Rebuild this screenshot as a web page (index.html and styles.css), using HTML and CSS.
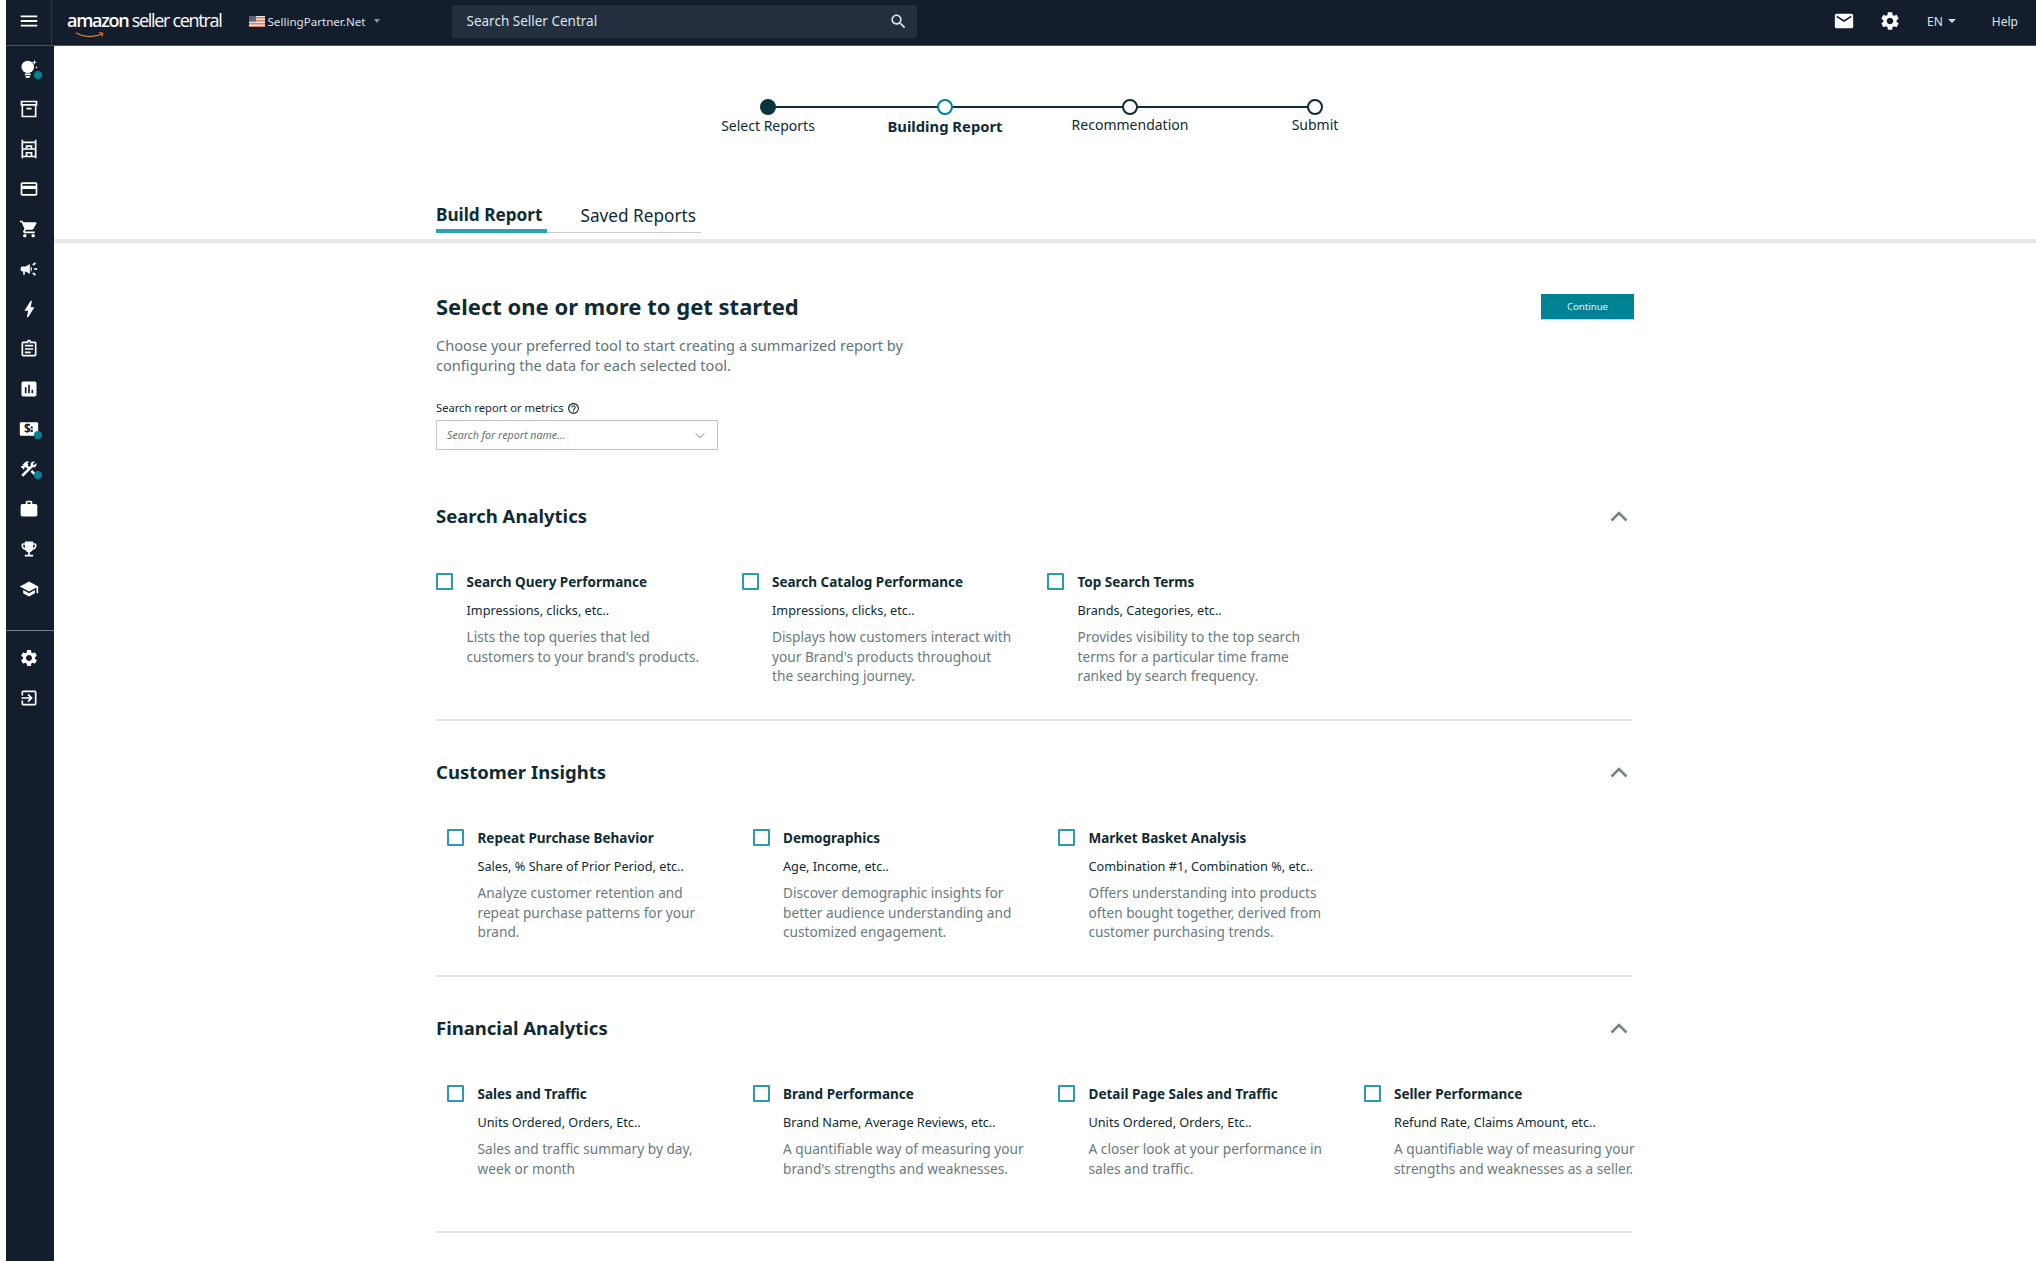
FILE: index.html
```html
<!DOCTYPE html>
<html lang="en">
<head>
    <meta charset="UTF-8">
    <title>Amazon Seller Central</title>
    <link rel="stylesheet" href="styles.css">
</head>
<body>
    <header class="topbar">
        <div class="menu-cell">
            <svg class="icon" viewBox="0 0 24 24"><path d="M3 18h18v-2H3v2zm0-5h18v-2H3v2zm0-7v2h18V6H3z"/></svg>
        </div>
        <div class="logo">
            <span class="logo-text"><b>amazon</b> seller central</span>
            <svg class="logo-smile" viewBox="0 0 34 8"><path d="M1 1.5C10 7 22 7 31 2.5" fill="none" stroke="#e8843a" stroke-width="1.3"/><path d="M27 1.2l4.6.6-1 4" fill="none" stroke="#e8843a" stroke-width="1.1"/></svg>
        </div>
        <div class="account">
            <svg class="flag" viewBox="0 0 16 11"><rect width="16" height="11" fill="#e9e4df"/><path d="M0 1h16v1.5H0zM0 4h16v1.5H0zM0 7h16v1.5H0zM0 10h16v1H0z" fill="#d9815f"/><rect width="7" height="5.5" fill="#5b6478"/></svg>
            <span>SellingPartner.Net</span>
            <i class="caret caret-dim"></i>
        </div>
        <div class="top-search">
            <span>Search Seller Central</span>
            <svg class="icon-search" viewBox="0 0 24 24"><path d="M15.5 14h-.79l-.28-.27C15.41 12.59 16 11.11 16 9.5 16 5.91 13.09 3 9.5 3S3 5.91 3 9.5 5.91 16 9.5 16c1.61 0 3.09-.59 4.23-1.57l.27.28v.79l5 4.99L20.49 19l-4.99-5zm-6 0C7.01 14 5 11.99 5 9.5S7.01 5 9.5 5 14 7.01 14 9.5 11.99 14 9.5 14z"/></svg>
        </div>
        <div class="top-right">
            <svg class="icon icon-mail" viewBox="0 0 24 24"><path d="M20 4H4c-1.1 0-1.99.9-1.99 2L2 18c0 1.1.9 2 2 2h16c1.1 0 2-.9 2-2V6c0-1.1-.9-2-2-2zm0 4l-8 5-8-5V6l8 5 8-5v2z"/></svg>
            <svg class="icon icon-gear" viewBox="0 0 24 24"><path d="M19.14 12.94c.04-.3.06-.61.06-.94 0-.32-.02-.64-.07-.94l2.03-1.58c.18-.14.23-.41.12-.61l-1.92-3.32c-.12-.22-.37-.29-.59-.22l-2.39.96c-.5-.38-1.03-.7-1.62-.94l-.36-2.54c-.04-.24-.24-.41-.48-.41h-3.84c-.24 0-.43.17-.47.41l-.36 2.54c-.59.24-1.13.57-1.62.94l-2.39-.96c-.22-.08-.47 0-.59.22L2.74 8.87c-.12.21-.08.47.12.61l2.03 1.58c-.05.3-.09.63-.09.94s.02.64.07.94l-2.03 1.58c-.18.14-.23.41-.12.61l1.92 3.32c.12.22.37.29.59.22l2.39-.96c.5.38 1.03.7 1.62.94l.36 2.54c.05.24.24.41.48.41h3.84c.24 0 .44-.17.47-.41l.36-2.54c.59-.24 1.13-.56 1.62-.94l2.39.96c.22.08.47 0 .59-.22l1.92-3.32c.12-.22.07-.47-.12-.61l-2.01-1.58zM12 15.6c-1.98 0-3.6-1.62-3.6-3.6s1.62-3.6 3.6-3.6 3.6 1.62 3.6 3.6-1.62 3.6-3.6 3.6z"/></svg>
            <span class="lang">EN</span><i class="caret"></i>
            <span class="help">Help</span>
        </div>
    </header>

    <div class="layout">
        <nav class="sidebar">
            <div class="side-group">
                <div class="side-item">
                    <svg class="icon" viewBox="0 0 24 24"><circle cx="10.5" cy="9.5" r="7.5"/><path d="M7 17.5h7v2H7zM8 20.5h5v2H8zM18.5 1l.8 2.2 2.2.8-2.2.8-.8 2.2-.8-2.2-2.2-.8 2.2-.8zM21 8.5l.5 1 1 .5-1 .5-.5 1-.5-1-1-.5 1-.5z"/></svg>
                    <i class="dot"></i>
                </div>
                <div class="side-item">
                    <svg class="icon" viewBox="0 0 24 24"><path fill-rule="evenodd" d="M2 2h20v6h-1v14H3V8H2zm2 2v2h16V4zm1 4v12h14V8zm4 2.5h6v2H9z"/></svg>
                </div>
                <div class="side-item">
                    <svg class="icon" viewBox="0 0 24 24"><path fill-rule="evenodd" d="M3 1h2v2h14V1h2v22h-2v-1H5v1H3zm2 4v6h3V7.500h8V11h3V5zm0 8v7h3v-4.500h8V20h3v-7zm5-3.500V11h4V9.500zm0 8V20h4v-2.500z"/></svg>
                </div>
                <div class="side-item">
                    <svg class="icon" viewBox="0 0 24 24"><path d="M20 4H4c-1.11 0-1.99.89-1.99 2L2 18c0 1.11.89 2 2 2h16c1.11 0 2-.89 2-2V6c0-1.11-.89-2-2-2zm0 14H4v-6h16v6zm0-10H4V6h16v2z"/></svg>
                </div>
                <div class="side-item">
                    <svg class="icon" viewBox="0 0 24 24"><path d="M7 18c-1.100 0-1.990.9-1.990 2S5.900 22 7 22s2-.9 2-2-.9-2-2-2zM1 2v2h2l3.600 7.590-1.350 2.450c-.16.28-.25.61-.25.96 0 1.100.9 2 2 2h12v-2H7.420c-.14 0-.25-.11-.25-.25l.03-.12.9-1.630h7.450c.75 0 1.410-.41 1.750-1.030l3.580-6.490c.08-.14.12-.31.12-.48 0-.55-.45-1-1-1H5.210l-.94-2H1zm16 16c-1.100 0-1.990.9-1.990 2s.89 2 1.990 2 2-.9 2-2-.9-2-2-2z"/></svg>
                </div>
                <div class="side-item">
                    <svg class="icon" viewBox="0 0 24 24"><path d="M18 11v2h4v-2h-4zm-2 6.610c.96.71 2.210 1.650 3.200 2.390.4-.53.8-1.070 1.200-1.600-.99-.74-2.240-1.680-3.200-2.400-.4.54-.8 1.080-1.200 1.610zM20.400 5.600c-.4-.53-.8-1.070-1.200-1.600-.99.74-2.240 1.680-3.200 2.400.4.53.8 1.070 1.200 1.600.96-.72 2.210-1.650 3.200-2.400zM4 9c-1.100 0-2 .9-2 2v2c0 1.100.9 2 2 2h1v4h2v-4h1l5 3V6L8 9H4zm11.500 3c0-1.330-.58-2.530-1.500-3.350v6.690c.92-.81 1.500-2.010 1.500-3.340z"/></svg>
                </div>
                <div class="side-item">
                    <svg class="icon" viewBox="0 0 24 24"><path d="M11 22h-1.500l1.500-8H6.500L14 2h1.500L14 10h4.500z"/></svg>
                </div>
                <div class="side-item">
                    <svg class="icon" viewBox="0 0 24 24"><path d="M19 3h-4.180C14.400 1.840 13.300 1 12 1s-2.400.84-2.820 2H5c-1.100 0-2 .9-2 2v14c0 1.100.9 2 2 2h14c1.100 0 2-.9 2-2V5c0-1.100-.9-2-2-2zm-7 0c.55 0 1 .45 1 1s-.45 1-1 1-1-.45-1-1 .45-1 1-1zm7 16H5V5h14v14zM7 15h7v2H7zm0-4h10v2H7zm0-4h10v2H7z"/></svg>
                </div>
                <div class="side-item">
                    <svg class="icon" viewBox="0 0 24 24"><path d="M19 3H5c-1.100 0-2 .9-2 2v14c0 1.100.9 2 2 2h14c1.100 0 2-.9 2-2V5c0-1.100-.9-2-2-2zM9 17H7v-7h2v7zm4 0h-2V7h2v10zm4 0h-2v-4h2v4z"/></svg>
                </div>
                <div class="side-item">
                    <svg class="icon" viewBox="0 0 24 24"><rect x="1" y="4" width="22" height="16" rx="1.500"/><text x="6" y="17" class="money">$</text><path d="M14 9h2.500v2.500H14zM14 13h2.500v2.500H14z" fill="#131d2c"/></svg>
                    <i class="dot"></i>
                </div>
                <div class="side-item">
                    <svg class="icon" viewBox="0 0 24 24"><path d="M13.783 15.172l2.121-2.121 5.996 5.996-2.121 2.121zM17.500 10c1.930 0 3.500-1.570 3.500-3.500 0-.58-.16-1.120-.41-1.600l-2.700 2.700-1.490-1.490 2.700-2.700c-.48-.25-1.020-.41-1.600-.41C15.570 3 14 4.570 14 6.500c0 .41.08.8.21 1.160l-1.850 1.850-1.780-1.780.71-.71-1.410-1.410L12 3.490c-1.170-1.170-3.070-1.170-4.240 0L4.220 7.030l1.410 1.410H2.810l-.71.71 3.540 3.540.71-.71V9.150l1.410 1.410.71-.71 1.780 1.780-7.410 7.410 2.120 2.120L16.340 9.790c.36.13.75.21 1.160.21z"/></svg>
                    <i class="dot"></i>
                </div>
                <div class="side-item">
                    <svg class="icon" viewBox="0 0 24 24"><path d="M20 6h-4V4c0-1.110-.89-2-2-2h-4c-1.110 0-2 .89-2 2v2H4c-1.110 0-1.990.89-1.990 2L2 19c0 1.110.89 2 2 2h16c1.110 0 2-.89 2-2V8c0-1.110-.89-2-2-2zm-6 0h-4V4h4v2z"/></svg>
                </div>
                <div class="side-item">
                    <svg class="icon" viewBox="0 0 24 24"><path d="M19 5h-2V3H7v2H5c-1.100 0-2 .9-2 2v1c0 2.550 1.920 4.630 4.390 4.940.63 1.500 1.980 2.630 3.610 2.960V19H7v2h10v-2h-4v-3.100c1.630-.33 2.980-1.460 3.610-2.960C19.080 12.630 21 10.550 21 8V7c0-1.100-.9-2-2-2zM5 8V7h2v3.820C5.840 10.400 5 9.300 5 8zm14 0c0 1.300-.84 2.400-2 2.820V7h2v1z"/></svg>
                </div>
                <div class="side-item">
                    <svg class="icon" viewBox="0 0 24 24"><path d="M5 13.180v4L12 21l7-3.820v-4L12 17l-7-3.820zM12 3L1 9l11 6 9-4.910V17h2V9L12 3z"/></svg>
                </div>
            </div>
            <div class="side-group side-bottom">
                <div class="side-item">
                    <svg class="icon" viewBox="0 0 24 24"><path d="M19.140 12.940c.04-.3.06-.61.06-.94 0-.32-.02-.64-.07-.94l2.030-1.580c.18-.14.23-.41.12-.61l-1.920-3.320c-.12-.22-.37-.29-.59-.22l-2.390.96c-.5-.38-1.030-.7-1.620-.94l-.36-2.540c-.04-.24-.24-.41-.48-.41h-3.840c-.24 0-.43.17-.47.41l-.36 2.540c-.59.24-1.130.57-1.620.94l-2.390-.96c-.22-.08-.47 0-.59.22L2.740 8.870c-.12.21-.08.47.12.61l2.030 1.580c-.05.3-.09.63-.09.94s.02.64.07.94l-2.030 1.580c-.18.14-.23.41-.12.61l1.920 3.320c.12.22.37.29.59.22l2.390-.96c.5.38 1.030.7 1.620.94l.36 2.540c.05.24.24.41.48.41h3.840c.24 0 .44-.17.47-.41l.36-2.540c.59-.24 1.130-.56 1.620-.94l2.390.96c.22.08.47 0 .59-.22l1.920-3.320c.12-.22.07-.47-.12-.61l-2.010-1.580zM12 15.600c-1.980 0-3.600-1.620-3.600-3.600s1.620-3.600 3.600-3.600 3.600 1.620 3.600 3.600-1.620 3.600-3.600 3.600z"/></svg>
                </div>
                <div class="side-item">
                    <svg class="icon" viewBox="0 0 24 24"><path d="M10.090 15.590L11.500 17l5-5-5-5-1.410 1.410L12.670 11H3v2h9.670l-2.580 2.590zM19 3H5c-1.110 0-2 .9-2 2v4h2V5h14v14H5v-4H3v4c0 1.100.89 2 2 2h14c1.100 0 2-.9 2-2V5c0-1.100-.9-2-2-2z"/></svg>
                </div>
            </div>
        </nav>

        <main class="main">
            <div class="stepper">
                <div class="step step-first"><span class="step-dot done"></span><span class="step-label">Select Reports</span></div>
                <div class="step step-active"><span class="step-dot current"></span><span class="step-label">Building Report</span></div>
                <div class="step step-next"><span class="step-dot"></span><span class="step-label">Recommendation</span></div>
                <div class="step step-next"><span class="step-dot"></span><span class="step-label">Submit</span></div>
            </div>

            <div class="tabs-wrap">
                <div class="tabs">
                    <div class="tab tab-active">Build Report</div>
                    <div class="tab">Saved Reports</div>
                </div>
            </div>

            <div class="content">
                <div class="intro">
                    <div class="intro-text">
                        <h1>Select one or more to get started</h1>
                        <p class="intro-desc">Choose your preferred tool to start creating a summarized report by<br>configuring the data for each selected tool.</p>
                        <div class="field-label">Search report or metrics
                            <svg class="help-icon" viewBox="0 0 24 24"><path d="M11 18h2v-2h-2v2zm1-16C6.480 2 2 6.480 2 12s4.480 10 10 10 10-4.480 10-10S17.520 2 12 2zm0 18c-4.410 0-8-3.590-8-8s3.590-8 8-8 8 3.590 8 8-3.590 8-8 8zm0-14c-2.210 0-4 1.790-4 4h2c0-1.100.9-2 2-2s2 .9 2 2c0 2-3 1.750-3 5h2c0-2.250 3-2.500 3-5 0-2.210-1.790-4-4-4z"/></svg>
                        </div>
                        <div class="report-search">
                            <span>Search for report name...</span>
                            <svg class="chev-down" viewBox="0 0 12 8"><path d="M1 1.500l5 5 5-5" fill="none" stroke="#7b8a8d" stroke-width="1.200"/></svg>
                        </div>
                    </div>
                    <button class="continue">Continue</button>
                </div>

                <section class="section">
                    <div class="section-head">
                        <h2>Search Analytics</h2>
                        <svg class="chev-up" viewBox="0 0 18 11"><path d="M1.500 9.500L9 2l7.500 7.500" fill="none" stroke="#6f8387" stroke-width="2.500"/></svg>
                    </div>
                    <div class="tools">
                        <div class="tool">
                            <span class="check"></span>
                            <div>
                                <div class="tool-name">Search Query Performance</div>
                                <div class="tool-sub">Impressions, clicks, etc..</div>
                                <p class="tool-desc">Lists the top queries that led<br>customers to your brand's products.</p>
                            </div>
                        </div>
                        <div class="tool">
                            <span class="check"></span>
                            <div>
                                <div class="tool-name">Search Catalog Performance</div>
                                <div class="tool-sub">Impressions, clicks, etc..</div>
                                <p class="tool-desc">Displays how customers interact with<br>your Brand's products throughout<br>the searching journey.</p>
                            </div>
                        </div>
                        <div class="tool">
                            <span class="check"></span>
                            <div>
                                <div class="tool-name">Top Search Terms</div>
                                <div class="tool-sub">Brands, Categories, etc..</div>
                                <p class="tool-desc">Provides visibility to the top search<br>terms for a particular time frame<br>ranked by search frequency.</p>
                            </div>
                        </div>
                    </div>
                </section>

                <section class="section">
                    <div class="section-head">
                        <h2>Customer Insights</h2>
                        <svg class="chev-up" viewBox="0 0 18 11"><path d="M1.500 9.500L9 2l7.500 7.500" fill="none" stroke="#6f8387" stroke-width="2.500"/></svg>
                    </div>
                    <div class="tools tools-indent">
                        <div class="tool">
                            <span class="check"></span>
                            <div>
                                <div class="tool-name">Repeat Purchase Behavior</div>
                                <div class="tool-sub">Sales, % Share of Prior Period, etc..</div>
                                <p class="tool-desc">Analyze customer retention and<br>repeat purchase patterns for your<br>brand.</p>
                            </div>
                        </div>
                        <div class="tool">
                            <span class="check"></span>
                            <div>
                                <div class="tool-name">Demographics</div>
                                <div class="tool-sub">Age, Income, etc..</div>
                                <p class="tool-desc">Discover demographic insights for<br>better audience understanding and<br>customized engagement.</p>
                            </div>
                        </div>
                        <div class="tool">
                            <span class="check"></span>
                            <div>
                                <div class="tool-name">Market Basket Analysis</div>
                                <div class="tool-sub">Combination #1, Combination %, etc..</div>
                                <p class="tool-desc">Offers understanding into products<br>often bought together, derived from<br>customer purchasing trends.</p>
                            </div>
                        </div>
                    </div>
                </section>

                <section class="section">
                    <div class="section-head">
                        <h2>Financial Analytics</h2>
                        <svg class="chev-up" viewBox="0 0 18 11"><path d="M1.500 9.500L9 2l7.500 7.500" fill="none" stroke="#6f8387" stroke-width="2.500"/></svg>
                    </div>
                    <div class="tools tools-indent">
                        <div class="tool">
                            <span class="check"></span>
                            <div>
                                <div class="tool-name">Sales and Traffic</div>
                                <div class="tool-sub">Units Ordered, Orders, Etc..</div>
                                <p class="tool-desc">Sales and traffic summary by day,<br>week or month</p>
                            </div>
                        </div>
                        <div class="tool">
                            <span class="check"></span>
                            <div>
                                <div class="tool-name">Brand Performance</div>
                                <div class="tool-sub">Brand Name, Average Reviews, etc..</div>
                                <p class="tool-desc">A quantifiable way of measuring your<br>brand's strengths and weaknesses.</p>
                            </div>
                        </div>
                        <div class="tool">
                            <span class="check"></span>
                            <div>
                                <div class="tool-name">Detail Page Sales and Traffic</div>
                                <div class="tool-sub">Units Ordered, Orders, Etc..</div>
                                <p class="tool-desc">A closer look at your performance in<br>sales and traffic.</p>
                            </div>
                        </div>
                        <div class="tool">
                            <span class="check"></span>
                            <div>
                                <div class="tool-name">Seller Performance</div>
                                <div class="tool-sub">Refund Rate, Claims Amount, etc..</div>
                                <p class="tool-desc">A quantifiable way of measuring your<br>strengths and weaknesses as a seller.</p>
                            </div>
                        </div>
                    </div>
                </section>
            </div>
        </main>
    </div>
</body>
</html>
```

FILE: styles.css
```css
* {
    margin: 0;
    padding: 0;
    box-sizing: border-box;
}

html, body {
    height: 1261px;
    overflow: hidden;
}

body {
    font-family: "Noto Sans", Arial, sans-serif;
    background-color: #fff;
    color: #0f2b33;
    padding-left: 6px;
}

.icon {
    width: 24px;
    height: 24px;
    fill: #fff;
    display: block;
}

/* top bar */
.topbar {
    height: 46px;
    background-color: #131d2c;
    border-bottom: 1px solid #4a5562;
    display: flex;
    align-items: center;
    color: #dfe4e6;
    padding-bottom: 3px;
}

.menu-cell {
    width: 46px;
    height: 45px;
    margin-bottom: -3px;
    padding-bottom: 3px;
    border-right: 1px solid #2f3a48;
    display: flex;
    align-items: center;
    justify-content: center;
    flex-shrink: 0;
}

.menu-cell .icon {
    width: 22px;
    height: 22px;
}

.logo {
    margin-left: 15px;
    width: 181.5px;
    position: relative;
    color: #fff;
}

.logo-text {
    font-family: "Open Sans", Arial, sans-serif;
    font-size: 18px;
    letter-spacing: -1.3px;
    white-space: nowrap;
    display: block;
    margin-top: -2px;
}

.logo-text b {
    font-weight: 600;
}

.logo-smile {
    position: absolute;
    left: 8px;
    top: 21px;
    width: 30px;
    height: 8px;
}

.account {
    display: flex;
    align-items: center;
    font-size: 11.6px;
    width: 203px;
}

.flag {
    width: 16px;
    height: 11px;
    margin-right: 3px;
}

.caret {
    width: 0;
    height: 0;
    border-left: 4px solid transparent;
    border-right: 4px solid transparent;
    border-top: 4px solid #d5dadc;
}

.caret-dim {
    margin-left: 9px;
    border-left-width: 3px;
    border-right-width: 3px;
    border-top-color: #8c95a0;
}

.top-search {
    width: 465px;
    height: 33px;
    background-color: #232f3e;
    border-radius: 2px;
    display: flex;
    align-items: center;
    justify-content: space-between;
    padding: 0 9px 0 15px;
    font-size: 13.5px;
}

.icon-search {
    width: 19px;
    height: 19px;
    fill: #dfe4e6;
}

.top-right {
    margin-left: auto;
    display: flex;
    align-items: center;
    font-size: 12px;
    padding-right: 18px;
}

.icon-mail {
    width: 22px;
    height: 22px;
}

.icon-gear {
    width: 22px;
    height: 22px;
    margin-left: 24px;
}

.lang {
    margin-left: 26px;
}

.top-right .caret {
    margin-left: 5px;
}

.help {
    margin-left: 36px;
}

/* sidebar + main */
.layout {
    display: flex;
    height: 1215px;
}

.sidebar {
    width: 48px;
    flex-shrink: 0;
    background-color: #131d2c;
    padding: 3px 2px 0 0;
}

.side-group {
    display: flex;
    flex-direction: column;
}

.side-bottom {
    margin: 21px -2px 0 0;
    padding: 7px 2px 0 0;
    border-top: 1px solid #77808a;
}

.side-item {
    height: 40px;
    display: flex;
    align-items: center;
    justify-content: center;
    position: relative;
}

.side-item .icon {
    width: 20px;
    height: 20px;
}

.money {
    font-size: 14px;
    font-weight: 700;
    fill: #131d2c;
}

.dot {
    position: absolute;
    left: 28px;
    top: 22px;
    width: 8px;
    height: 8px;
    border-radius: 50%;
    background-color: #008296;
}

.main {
    flex: 1;
    min-width: 0;
}

/* stepper */
.stepper {
    display: flex;
    gap: 25px;
    padding: 53px 0 0 634px;
    position: relative;
    height: 134px;
}

.stepper::before {
    content: "";
    position: absolute;
    left: 714px;
    top: 60px;
    width: 547px;
    height: 2px;
    background-color: #0f2b33;
}

.step {
    width: 160px;
    display: flex;
    flex-direction: column;
    align-items: center;
    position: relative;
    font-size: 14px;
}

.step-first {
    margin-right: -8px;
}

.step-dot {
    width: 16px;
    height: 16px;
    border-radius: 50%;
    border: 2px solid #0f2b33;
    background-color: #fff;
}

.step-dot.done {
    background-color: #0b333c;
    border-color: #0b333c;
}

.step-dot.current {
    border-color: #008296;
}

.step-label {
    margin-top: 1px;
    line-height: 20px;
}

.step-active .step-label {
    font-size: 14.8px;
    font-weight: 700;
    margin-top: 1px;
}

.step-next .step-label {
    margin-top: 0;
}

/* tabs */
.tabs-wrap {
    height: 63px;
    padding-left: 382px;
    border-bottom: 4px solid #e6e8e9;
}

.tabs {
    display: inline-flex;
    gap: 33px;
    border-bottom: 1px solid #c5ccce;
    height: 53px;
    padding-right: 5px;
    align-items: flex-end;
}

.tab {
    font-size: 17.2px;
    line-height: 24px;
    padding: 0 0 4px;
}

.tab-active {
    font-weight: 700;
    border-bottom: 4px solid #2ca3b0;
    padding: 0 5px 2px 0;
    margin-bottom: -1px;
}

/* content */
.content {
    padding-left: 382px;
    width: 1580px;
}

.intro {
    display: flex;
    justify-content: space-between;
    align-items: flex-start;
    height: 222px;
    padding-top: 48px;
}

h1 {
    font-size: 22px;
    line-height: 30px;
    font-weight: 700;
}

.intro-desc {
    margin-top: 14px;
    font-size: 14.6px;
    line-height: 20px;
    color: #5f7478;
}

.field-label {
    margin-top: 25px;
    font-size: 11.2px;
    line-height: 16px;
    display: flex;
    align-items: center;
    gap: 3px;
}

.help-icon {
    width: 13px;
    height: 13px;
    fill: #0f2b33;
}

.report-search {
    margin-top: 4px;
    width: 282px;
    height: 30px;
    border: 1px solid #c0c7c8;
    display: flex;
    align-items: center;
    justify-content: space-between;
    padding: 0 12px 0 10px;
    font-size: 10.7px;
    font-style: italic;
    color: #62757a;
}

.chev-down {
    width: 10px;
    height: 7px;
}

.continue {
    width: 93px;
    height: 25px;
    margin-top: 3px;
    background-color: #008296;
    color: #e8f3f4;
    border: none;
    font-family: inherit;
    font-size: 9.6px;
    box-shadow: 0 1px 1px rgba(0, 0, 0, 0.2);
}

.section {
    width: 1196px;
    height: 256px;
    padding-top: 39px;
    border-bottom: 2px solid #dfe2e3;
}

.section-head {
    display: flex;
    justify-content: space-between;
    align-items: center;
    height: 24px;
}

h2 {
    font-size: 18.5px;
    line-height: 24px;
    font-weight: 700;
}

.chev-up {
    width: 18px;
    height: 11px;
    margin-right: 4px;
}

.tools {
    display: grid;
    grid-template-columns: repeat(4, 305.5px);
    margin-top: 45px;
}

.tools-indent {
    padding-left: 11px;
}

.tool {
    display: flex;
    gap: 13.5px;
}

.check {
    width: 17px;
    height: 17px;
    border: 2px solid #2a9cab;
    border-radius: 1px;
    flex-shrink: 0;
}

.tool-name {
    margin-top: -1px;
    font-size: 13.5px;
    font-weight: 700;
    line-height: 20px;
    white-space: nowrap;
}

.tool-sub {
    margin-top: 8px;
    font-size: 12.7px;
    line-height: 20px;
    white-space: nowrap;
}

.tool-desc {
    margin-top: 7px;
    font-size: 13.7px;
    line-height: 19.5px;
    color: #687b7f;
    white-space: nowrap;
}
```
